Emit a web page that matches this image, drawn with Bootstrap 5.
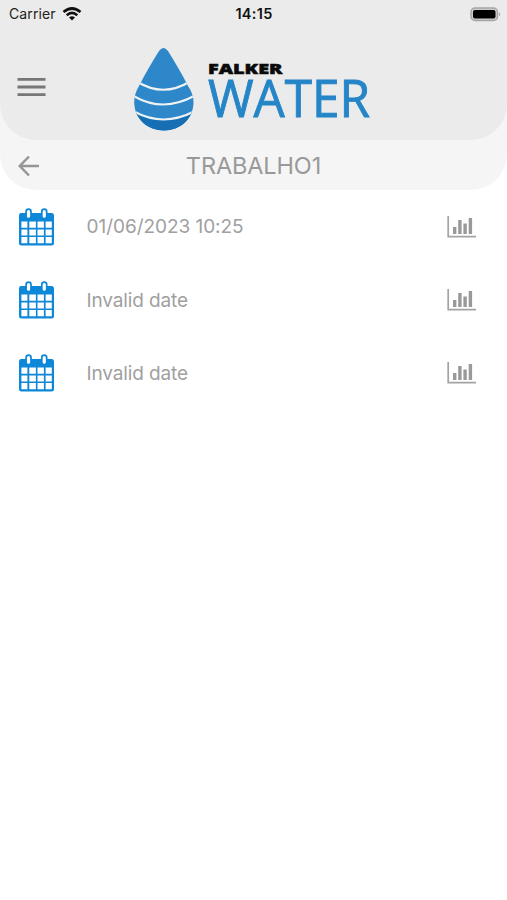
<!DOCTYPE html>
<html lang="pt-BR">
<head>
<meta charset="utf-8">
<meta name="viewport" content="width=device-width, initial-scale=1">
<title>Falker Water</title>
<link href="https://cdn.jsdelivr.net/npm/bootstrap@5.3.0/dist/css/bootstrap.min.css" rel="stylesheet">
<style>
body{font-family:Inter,"Liberation Sans",sans-serif;background:#fff;height:900px;overflow:hidden}
svg{display:block;flex:none}
.top-shell{background:#f5f5f5;border-radius:0 0 36px 36px;height:190px}
.app-head{background:#ebebeb;border-radius:0 0 36px 36px;height:140px}
.status{height:28px;font-size:14px;line-height:28px;color:#222;padding:0 6px 0 9px}
.status>div{flex:1 1 0}
.carrier{letter-spacing:.12px}
.wifi{margin-left:6px}
.clock{font-weight:600;font-size:14.5px;color:#111;letter-spacing:.3px;margin-right:2px}
.brand-row{height:112px;padding-top:12px}
.menu-btn{padding:0 0 7px 17px;width:132px}
.title-row{height:50px;color:#999;padding-top:2px}
.title-row h1{font-size:23.5px;font-weight:400;letter-spacing:-.12px;line-height:48px}
.back{width:60px;padding-left:18px}
.entry{height:73.3px;padding:0 31px 0 18px;color:#a0a0a0;font-size:19px}
.entry span{margin-left:32.500px;padding-top:2px;letter-spacing:-.04px}
.entry .invalid{letter-spacing:-.12px}
</style>
</head>
<body>
<svg width="0" height="0" class="position-absolute" aria-hidden="true">
<symbol id="calendar" viewBox="0 0 36 38">
<path fill="#0d87d8" d="M3 5H33.500Q36 5 36 8V35Q36 37.500 33.500 37.500H3.500Q1 37.500 1 35V8Q1 5 3 5Z"/>
<g fill="#fff"><path d="M3.400 13.500h6v6.300h-6zM11.300 13.500h6.600v6.300h-6.600zM19.500 13.500h6.400v6.300h-6.400zM27.600 13.500h6.200v6.300h-6.200zM3.400 21.400h6v6h-6zM11.300 21.400h6.600v6h-6.600zM19.500 21.400h6.400v6h-6.400zM27.600 21.400h6.200v6h-6.200zM3.400 29h6v6.300h-6zM11.300 29h6.600v6.300h-6.600zM19.500 29h6.400v6.300h-6.400zM27.600 29h6.200v6.300h-6.200z"/></g>
<g fill="#fff" stroke="#0d87d8" stroke-width="1.700"><rect x="8.100" y="1.200" width="4.900" height="9.500" rx="2.450"/><rect x="23.800" y="1.200" width="4.900" height="9.500" rx="2.450"/></g>
</symbol>
<symbol id="chart" viewBox="0 0 29 22"><path d="M1.200 0V20.700H29" fill="none" stroke="#a3a3a3" stroke-width="1.700"/><path fill="#999" d="M6 11h3.400v7H6zM11.200 4h3.400v14h-3.400zM16.400 7.500h3.400V18h-3.400zM21.700 2h3.400v16h-3.400z"/></symbol>
</svg>
<header class="top-shell">
<div class="app-head">
<div class="status d-flex align-items-center">
<div class="d-flex align-items-center"><span class="carrier">Carrier</span>
<svg class="wifi" width="20" height="14" viewBox="0 0 20 14"><g fill="none" stroke="#111" stroke-width="2.700"><path d="M1.500 5Q10-2 18.500 5"/><path d="M4.700 8.200Q10 3.700 15.300 8.200"/></g><path fill="#111" d="M7 10.500Q10 8 13 10.500L10 13.500Z"/></svg></div>
<span class="clock">14:15</span>
<div class="d-flex justify-content-end"><svg width="31" height="15" viewBox="0 0 31 15"><rect x="1" y="1" width="26.500" height="12.500" rx="4" fill="#ccc" stroke="#a5a5a5" stroke-width="1.500"/><rect x="3" y="3" width="22.500" height="8.500" rx="2" fill="#000"/><path d="M29 5.200Q31.500 7.200 29 9.200Z" fill="#aaa"/></svg></div>
</div>
<div class="brand-row d-flex align-items-center">
<div class="menu-btn"><svg width="29" height="20" viewBox="0 0 29 20" stroke="#777" stroke-width="2.800"><path d="M.5 2.300H28.500M.5 10H28.500M.5 17.600H28.500"/></svg></div>
<svg width="252" height="90" viewBox="0 0 252 90" role="img" aria-label="Falker Water">
<defs><clipPath id="drop"><path d="M27 6Q31.500 0 36 6C43 17 50 29 56 41Q61.500 49 61.500 57C61.500 74 48 85.500 32 85.500S2.200 74 2.200 57Q2.200 49 7 41C13 29 20 17 27 6Z"/></clipPath></defs>
<g clip-path="url(#drop)"><path fill="#2d87c9" d="M0 0H64V90H0Z"/><path fill="#166fb5" d="M0 64Q31 84.500 64 64V90H0Z"/>
<g fill="none" stroke="#edf2f5" stroke-width="2.200"><path d="M5 36.500Q31 53 58 36.500M0 50Q31 69 64 50M0 65.500Q31 83.500 64 65.500"/></g></g>
<text x="76" y="28.500" font-family="'Open Sans',sans-serif" font-size="13.500" font-weight="800" stroke="#0a0a0a" stroke-width=".5" fill="#0a0a0a" textLength="74.500" lengthAdjust="spacingAndGlyphs">FALKER</text>
<text x="76" y="72" font-family="'Open Sans',sans-serif" font-size="50.500" fill="#2585c7" stroke="#2585c7" stroke-width=".9" textLength="162" lengthAdjust="spacingAndGlyphs">WATER</text>
</svg>
</div>
</div>
<div class="title-row d-flex align-items-center">
<div class="back"><svg width="22" height="22" viewBox="0 0 22 22" fill="none" stroke="#969696" stroke-width="2.500"><path d="M21 11H2M11 1.500L1.800 11L11 20.500"/></svg></div>
<h1 class="flex-fill text-center m-0">TRABALHO1</h1><div class="back"></div>
</div>
</header>
<main>
<div class="entry d-flex align-items-center"><svg width="36" height="38"><use href="#calendar"/></svg><span>01/06/2023 10:25</span><svg class="ms-auto" width="29" height="22"><use href="#chart"/></svg></div>
<div class="entry d-flex align-items-center"><svg width="36" height="38"><use href="#calendar"/></svg><span class="invalid">Invalid date</span><svg class="ms-auto" width="29" height="22"><use href="#chart"/></svg></div>
<div class="entry d-flex align-items-center"><svg width="36" height="38"><use href="#calendar"/></svg><span class="invalid">Invalid date</span><svg class="ms-auto" width="29" height="22"><use href="#chart"/></svg></div>
</main>
<script src="https://cdn.jsdelivr.net/npm/bootstrap@5.3.0/dist/js/bootstrap.bundle.min.js"></script>
</body>
</html>
